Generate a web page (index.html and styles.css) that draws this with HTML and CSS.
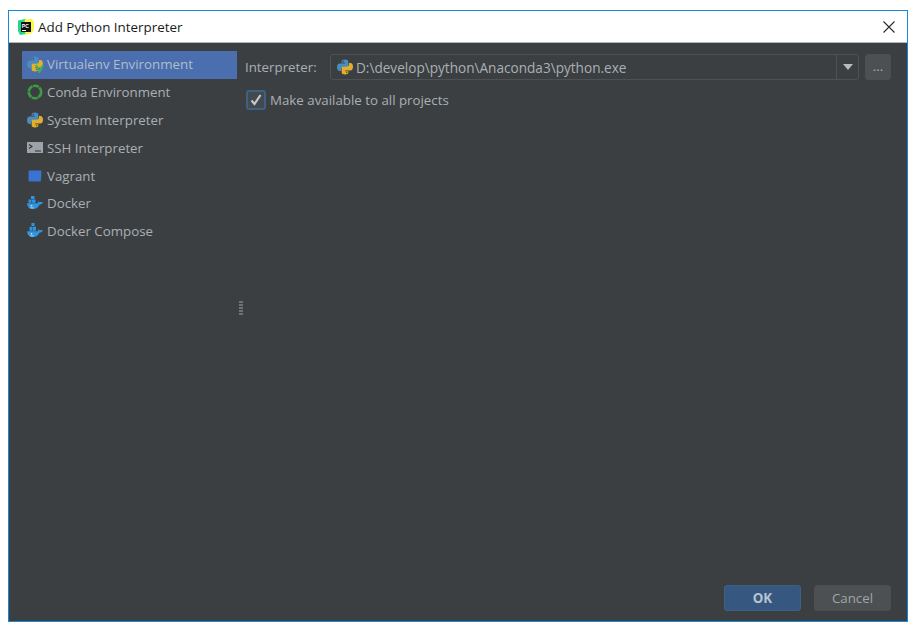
FILE: index.html
```html
<!DOCTYPE html>
<html lang="en">
<head>
<meta charset="utf-8">
<title>Add Python Interpreter</title>
<link rel="stylesheet" href="styles.css">
</head>
<body>
<svg class="defs" width="0" height="0">
  <defs>
    <symbol id="py" viewBox="0 0 16 16">
      <path fill="#4b8bbe" d="M4.600 3C4.600 1.200 6 .5 8 .5s3.400.7 3.400 2.500V7c0 .9-.6 1.300-1.300 1.300H6.300C5 8.300 4 9.300 4 10.500V12H2.600C1 12 0 10.500 0 8.200S1 4.400 2.700 4.400H8V3.700H4.600z"/>
      <path fill="#e0b02c" d="M11.400 13C11.400 14.800 10 15.500 8 15.500S4.600 14.800 4.600 13V9c0-.9.6-1.300 1.300-1.300h3.800C11 7.700 12 6.700 12 5.500V4h1.400C15 4 16 5.500 16 7.800s-1 3.800-2.700 3.800H8v.7h3.400z"/>
      <circle cx="6.300" cy="2.500" r=".7" fill="#2b4a66"/>
      <circle cx="9.700" cy="13.500" r=".7" fill="#6b5312"/>
    </symbol>
    <symbol id="whale" viewBox="0 0 16 16">
      <path fill="#2f95e0" d="M0 8.300h10.800c.4-1 .2-2 .2-2s1.100.1 1.600 1.100c.8-.4 2.300-.4 3.400.2-1 1.700-2.400 2.100-3.500 2.100-1.100 2.800-3.600 4.300-6.600 4.300C2.300 14 .3 11.900 0 8.300z"/>
      <circle cx="4.500" cy="10.800" r=".8" fill="#d8eefc"/>
      <path fill="#d8eefc" d="M2.800 12.600h4v.7h-4z"/>
    </symbol>
  </defs>
</svg>
<main class="window">
  <header class="titlebar">
    <svg class="app-icon" width="16" height="16" viewBox="0 0 16 16" aria-hidden="true">
      <path fill="#21d789" d="M0 1.500 7 0l4 1-3 14-6 1-2-4z"/>
      <path fill="#fcf84a" d="M7 0h7l2 3v8l-2 3-6 2-2-6z"/>
      <rect x="3" y="3" width="10" height="10" fill="#111"/>
      <rect x="4" y="11" width="4" height="1" fill="#fff"/>
      <text class="app-glyph" x="3.800" y="8.800">PC</text>
    </svg>
    <span class="title-text">Add Python Interpreter</span>
    <svg class="close" width="12" height="12" viewBox="0 0 12 12" aria-hidden="true">
      <path d="M.5.500l11 11M11.500.500l-11 11" stroke="#2b2b2b" stroke-width="1.100" fill="none"/>
    </svg>
  </header>
  <div class="body">
    <div class="columns">
      <nav class="sidebar">
        <div class="item selected">
          <span class="ico">
            <svg width="16" height="16"><use href="#py"/></svg>
            <svg class="venv" width="9" height="9" viewBox="0 0 9 9"><path d="M1 1l3.500 7L8 1" stroke="#3fb34f" stroke-width="2" fill="none"/></svg>
          </span>
          <span>Virtualenv Environment</span>
        </div>
        <div class="item">
          <span class="ico"><svg width="16" height="16" viewBox="0 0 16 16"><circle cx="8" cy="8" r="6.200" fill="none" stroke="#3f9a45" stroke-width="2.600" stroke-dasharray="6 .6"/></svg></span>
          <span>Conda Environment</span>
        </div>
        <div class="item">
          <span class="ico"><svg width="16" height="16"><use href="#py"/></svg></span>
          <span>System Interpreter</span>
        </div>
        <div class="item">
          <span class="ico"><svg width="16" height="16" viewBox="0 0 16 16"><rect y="2" width="16" height="11" fill="#9da3a8"/><path d="M2 4.500l3 2-3 2" stroke="#2f3234" fill="none" stroke-width="1.100"/><path d="M8 11h6" stroke="#2f3234" stroke-width="1"/></svg></span>
          <span>SSH Interpreter</span>
        </div>
        <div class="item">
          <span class="ico"><svg width="16" height="16" viewBox="0 0 16 16"><path fill="#3a74d0" d="M2 2.500h12.500l-.5 9.500q0 1.500-1.500 1.500H3q-1.500 0-1.500-1.500V3.500z"/></svg></span>
          <span>Vagrant</span>
        </div>
        <div class="item">
          <span class="ico"><svg width="16" height="16" viewBox="0 0 16 16"><use href="#whale"/><path fill="#2f95e0" d="M4 1h3.500v3H4zM1.500 4.500H4.500v3.200h-3zM5 4.500h3.500v3.200H5z"/></svg></span>
          <span>Docker</span>
        </div>
        <div class="item">
          <span class="ico"><svg width="16" height="16" viewBox="0 0 16 16"><use href="#whale"/><path fill="#2f95e0" d="M4.500 0h3v3h-3zM2.500 3.800h3v4h-3zM6 3.800h3v4H6z"/></svg></span>
          <span>Docker Compose</span>
        </div>
      </nav>
      <div class="splitter" aria-hidden="true"><i></i><i></i><i></i><i></i><i></i></div>
      <section class="panel">
        <div class="row">
          <label class="label">Interpreter:</label>
          <div class="combo">
            <svg width="16" height="16"><use href="#py"/></svg>
            <span class="path">D:\develop\python\Anaconda3\python.exe</span>
            <span class="arrow"><svg width="10" height="6" viewBox="0 0 10 6"><path d="M0 0h10L5 6z" fill="#bbb"/></svg></span>
          </div>
          <button class="browse" type="button">...</button>
        </div>
        <div class="check-row">
          <span class="checkbox"><svg width="14" height="14" viewBox="0 0 14 14"><path d="M2.500 7.500l3 3.500 6-9" fill="none" stroke="#c8c8c8" stroke-width="2.200"/></svg></span>
          <span>Make available to all projects</span>
        </div>
      </section>
    </div>
    <footer class="footer">
      <button class="btn ok" type="button">OK</button>
      <button class="btn" type="button">Cancel</button>
    </footer>
  </div>
</main>
</body>
</html>
```
FILE: styles.css
```css
* { box-sizing: border-box; }
html, body { height: 100%; }
body {
  margin: 0;
  padding: 10px 6px 6px 8px;
  background: #fff;
  font-family: "Open Sans", "Noto Sans", sans-serif;
  font-size: 13.300px;
  color: #a9b0b5;
}
.defs { position: absolute; }
.window {
  width: 900px;
  height: 612px;
  border: 1px solid #1a86d8;
  display: flex;
  flex-direction: column;
}
.titlebar {
  height: 32px;
  flex: none;
  display: flex;
  align-items: center;
  padding: 0 12px 0 9px;
  background: #fff;
  border-bottom: 1px solid #b4b6b8;
  color: #1a1a1a;
  font-size: 13.400px;
}
.app-icon { margin-right: 4px; }
.app-glyph { font: bold 5px "Liberation Sans", sans-serif; fill: #fff; }
.title-text { flex: 1; }
.body {
  flex: 1;
  min-height: 0;
  background: #3c3f41;
  display: flex;
  flex-direction: column;
}
.columns { flex: 1; min-height: 0; display: flex; }
.sidebar {
  width: 228px;
  flex: none;
  padding: 8px 0 0 13px;
}
.item {
  height: 27.800px;
  display: flex;
  align-items: center;
  padding: 0 0 1px 5px;
}
.item.selected { background: #4b6eaf; color: #b4bcc8; }
.ico {
  position: relative;
  width: 16px;
  height: 16px;
  margin-right: 4px;
  flex: none;
  display: block;
}
.ico svg { display: block; }
.ico .venv { position: absolute; right: -1px; bottom: -1px; }
.splitter {
  width: 8px;
  flex: none;
  display: flex;
  flex-direction: column;
  justify-content: center;
  align-items: center;
  gap: 1px;
  padding-bottom: 12px;
}
.splitter i { width: 4px; height: 2px; background: #6f7274; }
.panel { flex: 1; padding: 11px 16px 0 0; min-width: 0; }
.row { display: flex; align-items: center; height: 26px; }
.label { width: 85px; flex: none; }
.combo {
  width: 529px;
  height: 26px;
  display: flex;
  align-items: center;
  padding-left: 6px;
  border: 1px solid #4e5254;
  border-radius: 3px;
  background: #3c3f41;
}
.path { flex: 1; margin-left: 3px; font-size: 13.600px; }
.arrow {
  width: 22px;
  height: 100%;
  border-left: 1px solid #4e5254;
  display: flex;
  align-items: center;
  justify-content: center;
}
.browse {
  width: 26px;
  height: 26px;
  margin-left: 6px;
  border: 1px solid #4c5052;
  border-radius: 3px;
  background: #4c5052;
  color: #a9b0b5;
  font: inherit;
  padding: 0;
  line-height: 1;
}
.check-row { display: flex; align-items: center; margin-top: 9px; height: 21px; }
.checkbox {
  width: 20px;
  height: 20px;
  margin-left: 1px;
  margin-right: 4px;
  display: flex;
  align-items: center;
  justify-content: center;
  background: #43494e;
  border: 2px solid #3d6185;
  border-radius: 3px;
}
.footer {
  flex: none;
  display: flex;
  justify-content: flex-end;
  gap: 13px;
  padding: 0 16px 10px 0;
}
.btn {
  width: 77px;
  height: 26px;
  border: 1px solid #4c5052;
  border-radius: 3px;
  background: #4c5052;
  color: #a0a5a8;
  font: inherit;
  padding: 0;
}
.btn.ok {
  background: #365880;
  border-color: #3d6185;
  color: #b8c4d0;
  font-weight: 700;
}
```
